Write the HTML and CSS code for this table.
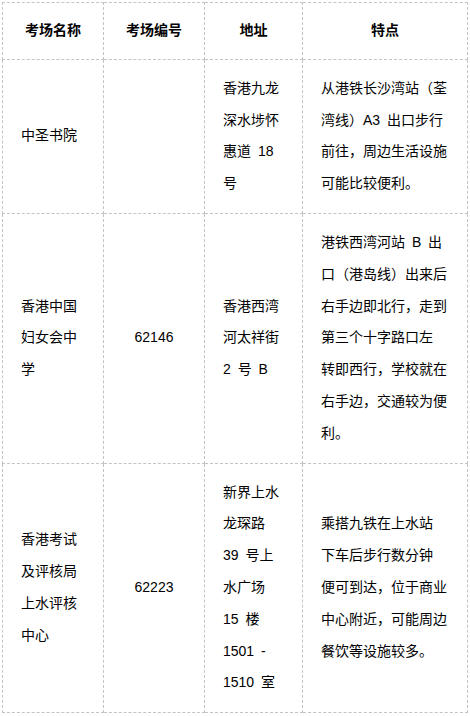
FILE: index.html
```html
<!DOCTYPE html>
<html lang="zh-CN">
<head>
<meta charset="utf-8">
<title>考场信息</title>
<link rel="stylesheet" href="styles.css">
</head>
<body>
<table class="exam-table">
  <colgroup>
    <col class="c-name">
    <col class="c-code">
    <col class="c-addr">
    <col class="c-note">
  </colgroup>
  <thead>
    <tr>
      <th>考场名称</th>
      <th>考场编号</th>
      <th>地址</th>
      <th>特点</th>
    </tr>
  </thead>
  <tbody>
    <tr>
      <td>中圣书院</td>
      <td class="code"></td>
      <td>香港九龙<br>深水埗怀<br>惠道 18<br>号</td>
      <td>从港铁长沙湾站（荃<br>湾线）A3 出口步行<br>前往，周边生活设施<br>可能比较便利。</td>
    </tr>
    <tr>
      <td>香港中国<br>妇女会中<br>学</td>
      <td class="code">62146</td>
      <td>香港西湾<br>河太祥街<br>2 号 B</td>
      <td>港铁西湾河站 B 出<br>口（港岛线）出来后<br>右手边即北行，走到<br>第三个十字路口左<br>转即西行，学校就在<br>右手边，交通较为便<br>利。</td>
    </tr>
    <tr>
      <td>香港考试<br>及评核局<br>上水评核<br>中心</td>
      <td class="code">62223</td>
      <td>新界上水<br>龙琛路<br>39 号上<br>水广场<br>15 楼<br>1501 -<br>1510 室</td>
      <td>乘搭九铁在上水站<br>下车后步行数分钟<br>便可到达，位于商业<br>中心附近，可能周边<br>餐饮等设施较多。</td>
    </tr>
  </tbody>
</table>
</body>
</html>
```

FILE: styles.css
```css
html, body {
  margin: 0;
  padding: 0;
  background: #ffffff;
}

body {
  padding: 2px 0 0 2px;
  font-family: "Liberation Sans", "Noto Sans CJK SC", sans-serif;
  font-size: 14px;
  color: #000;
}

.exam-table {
  border-collapse: collapse;
  table-layout: fixed;
  width: 465px;
}

.c-name { width: 101px; }
.c-code { width: 101px; }
.c-addr { width: 98px; }
.c-note { width: 165px; }

.exam-table th,
.exam-table td {
  border: 1px dashed #c4c4c4;
  line-height: 31.8px;
  vertical-align: middle;
  white-space: nowrap;
}

.exam-table th {
  padding: 12px 4px;
  font-weight: bold;
  text-align: center;
}

.exam-table td {
  padding: 13px 18px;
  text-align: left;
  word-spacing: 3px;
}

.exam-table td.code {
  text-align: center;
  padding-left: 4px;
  padding-right: 4px;
}
```
